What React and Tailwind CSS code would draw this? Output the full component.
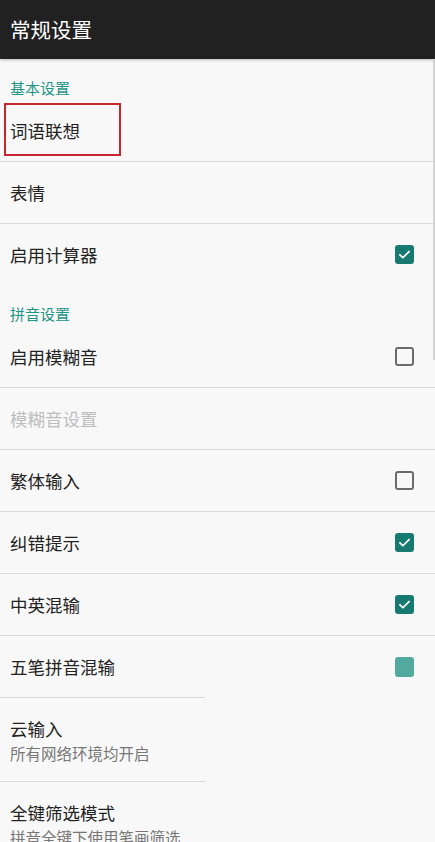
import React from "react";

const font = { fontFamily: '"Noto Sans CJK SC", "Noto Sans", sans-serif' };

function Checkbox({ checked, faded }) {
  if (faded) {
    return <div className="w-[19px] h-[20px] rounded-[3px] bg-[#52a99e]" />;
  }
  if (!checked) {
    return <div className="w-[19px] h-[19px] rounded-[3px] border-2 border-[#6b6b6b]" />;
  }
  return (
    <div className="w-[19px] h-[19px] rounded-[3px] bg-[#177a70] flex items-center justify-center">
      <svg width="13" height="13" viewBox="0 0 24 24" fill="none">
        <path d="M3.5 12.5l5.5 5.5L20.5 6.5" stroke="white" strokeWidth="3.2" strokeLinecap="round" strokeLinejoin="round" />
      </svg>
    </div>
  );
}

function Section({ title }) {
  return (
    <div className="h-[41px] pt-[19px] pl-[10px] text-[15px] leading-[20px] text-[#1f9586]">
      {title}
    </div>
  );
}

function Row({ title, sub, check, disabled, highlight }) {
  return (
    <div className={`${sub ? "h-[83px]" : "h-[61px]"} flex items-center justify-between pl-[10px] pr-[21px]`}>
      <div className="relative">
        {highlight && (
          <div className="absolute -left-[6px] -top-[16px] w-[117px] h-[53px] border-2 border-[#c6262e]" />
        )}
        <div className={`text-[17.5px] leading-[24px] ${disabled ? "text-[#bdbdbd]" : "text-[#222]"}`}>{title}</div>
        {sub && <div className="text-[15.5px] leading-[20px] text-[#777] mt-[2px]">{sub}</div>}
      </div>
      {check !== undefined && <Checkbox checked={check === true} faded={check === "faded"} />}
    </div>
  );
}

const Divider = ({ short }) => (
  <div className={`h-px bg-[#dadada] ${short ? "w-[205px]" : "w-full"}`} />
);

export default function App() {
  return (
    <div className="w-[435px] h-[842px] overflow-hidden bg-[#f8f8f8] relative" style={font}>
      <div className="h-[59px] bg-[#212121] flex items-center pl-[10px] text-white text-[20.5px] shadow-[0_1px_3px_rgba(0,0,0,0.25)] relative z-10">
        常规设置
      </div>
      <Section title="基本设置" />
      <Row title="词语联想" highlight />
      <Divider />
      <Row title="表情" />
      <Divider />
      <Row title="启用计算器" check={true} />
      <Section title="拼音设置" />
      <Row title="启用模糊音" check={false} />
      <Divider />
      <Row title="模糊音设置" disabled />
      <Divider />
      <Row title="繁体输入" check={false} />
      <Divider />
      <Row title="纠错提示" check={true} />
      <Divider />
      <Row title="中英混输" check={true} />
      <Divider />
      <Row title="五笔拼音混输" check="faded" />
      <Divider short />
      <Row title="云输入" sub="所有网络环境均开启" />
      <Divider short />
      <Row title="全键筛选模式" sub="拼音全键下使用笔画筛选" />
      <div className="absolute right-0 top-[60px] w-[2px] h-[300px] bg-[#d4d4d4]" />
    </div>
  );
}
